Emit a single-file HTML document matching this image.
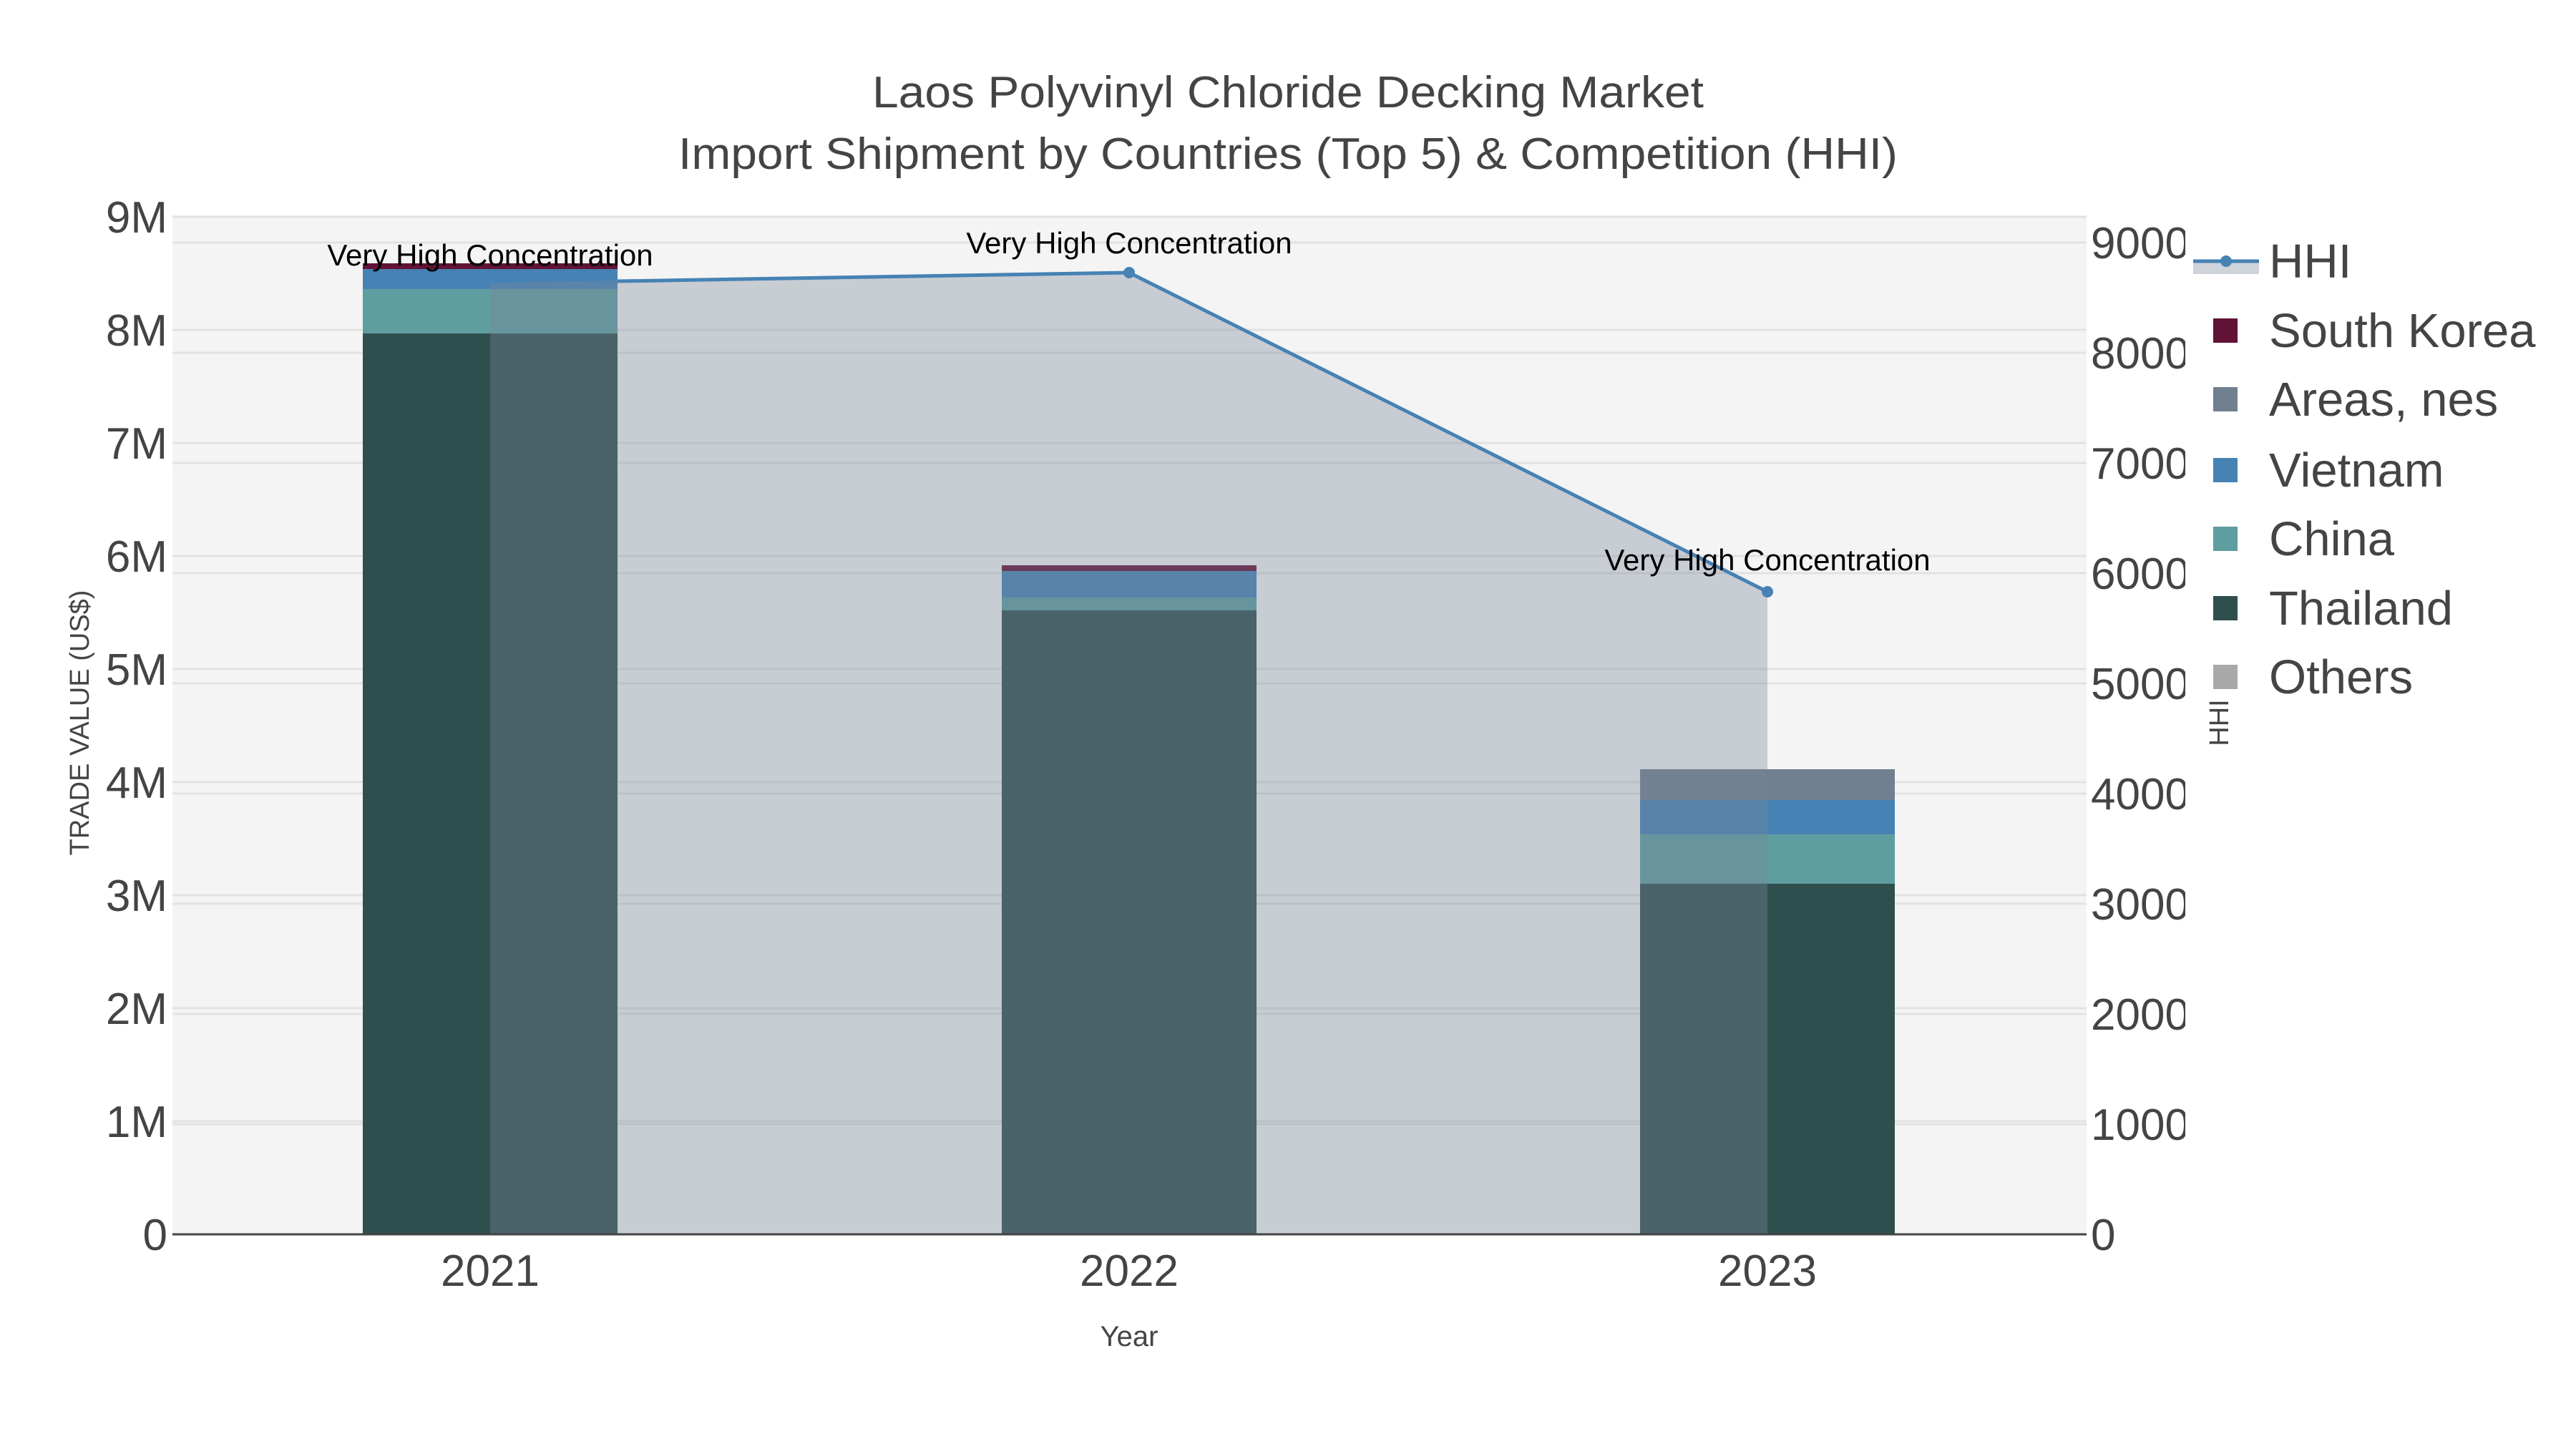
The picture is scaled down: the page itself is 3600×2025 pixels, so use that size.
<!DOCTYPE html>
<html><head><meta charset="utf-8"><style>
html,body{margin:0;padding:0;background:#fff;}
svg{display:block;font-family:"Liberation Sans",sans-serif;}
</style></head><body>
<svg width="3600" height="2025" viewBox="0 0 3600 2025" xmlns="http://www.w3.org/2000/svg">
<rect width="3600" height="2025" fill="#fff"/>
<text x="1800" y="150" font-size="62" fill="#444" text-anchor="middle" textLength="1162" lengthAdjust="spacingAndGlyphs">Laos Polyvinyl Chloride Decking Market</text>
<text x="1800" y="236" font-size="62" fill="#444" text-anchor="middle" textLength="1704" lengthAdjust="spacingAndGlyphs">Import Shipment by Countries (Top 5) &amp; Competition (HHI)</text>
<rect x="241" y="301" width="2675" height="1424" fill="#f4f4f4"/>
<g stroke="#e2e2e2" stroke-width="3">
<line x1="241" x2="2916" y1="1567" y2="1567"/><line x1="241" x2="2916" y1="1409" y2="1409"/><line x1="241" x2="2916" y1="1251" y2="1251"/><line x1="241" x2="2916" y1="1093" y2="1093"/><line x1="241" x2="2916" y1="935" y2="935"/><line x1="241" x2="2916" y1="777" y2="777"/><line x1="241" x2="2916" y1="619" y2="619"/><line x1="241" x2="2916" y1="461" y2="461"/><line x1="241" x2="2916" y1="303" y2="303"/>
<line x1="241" x2="2916" y1="1571" y2="1571"/><line x1="241" x2="2916" y1="1417" y2="1417"/><line x1="241" x2="2916" y1="1263" y2="1263"/><line x1="241" x2="2916" y1="1109" y2="1109"/><line x1="241" x2="2916" y1="955" y2="955"/><line x1="241" x2="2916" y1="801" y2="801"/><line x1="241" x2="2916" y1="647" y2="647"/><line x1="241" x2="2916" y1="493" y2="493"/><line x1="241" x2="2916" y1="339" y2="339"/>
</g>
<rect x="507" y="466" width="356" height="1259" fill="#2F4F4F"/>
<rect x="507" y="404" width="356" height="62" fill="#5F9EA0"/>
<rect x="507" y="376" width="356" height="28" fill="#4682B4"/>
<rect x="507" y="368" width="356" height="8" fill="#611236"/>
<rect x="1400" y="853" width="356" height="872" fill="#2F4F4F"/>
<rect x="1400" y="835" width="356" height="18" fill="#5F9EA0"/>
<rect x="1400" y="798" width="356" height="37" fill="#4682B4"/>
<rect x="1400" y="790" width="356" height="8" fill="#611236"/>
<rect x="2292" y="1235" width="356" height="490" fill="#2F4F4F"/>
<rect x="2292" y="1166" width="356" height="69" fill="#5F9EA0"/>
<rect x="2292" y="1118" width="356" height="48" fill="#4682B4"/>
<rect x="2292" y="1075" width="356" height="43" fill="#708090"/>
<polygon points="685,395 1578,381 2470,827 2470,1725 685,1725" fill="rgb(122,133,153)" fill-opacity="0.36"/>
<polyline points="863,393 1578,381 2470,827" fill="none" stroke="#4682B4" stroke-width="5"/>
<circle cx="1578" cy="381" r="8" fill="#4682B4"/>
<circle cx="2470" cy="827" r="8" fill="#4682B4"/>
<line x1="241" x2="2916" y1="1725" y2="1725" stroke="#444" stroke-width="3"/>
<g font-size="42" fill="#000" text-anchor="middle">
<text x="685" y="371">Very High Concentration</text>
<text x="1578" y="354">Very High Concentration</text>
<text x="2470" y="797">Very High Concentration</text>
</g>
<g font-size="62" fill="#444" text-anchor="end">
<text x="234" y="1747">0</text><text x="234" y="1589">1M</text><text x="234" y="1431">2M</text><text x="234" y="1273">3M</text><text x="234" y="1115">4M</text><text x="234" y="957">5M</text><text x="234" y="799">6M</text><text x="234" y="641">7M</text><text x="234" y="483">8M</text><text x="234" y="325">9M</text>
</g>
<defs><clipPath id="rc"><rect x="2916" y="0" width="138" height="2025"/></clipPath></defs>
<g font-size="62" fill="#444" clip-path="url(#rc)">
<text x="2922" y="1747">0</text><text x="2922" y="1593">1000</text><text x="2922" y="1439">2000</text><text x="2922" y="1285">3000</text><text x="2922" y="1131">4000</text><text x="2922" y="977">5000</text><text x="2922" y="823">6000</text><text x="2922" y="669">7000</text><text x="2922" y="515">8000</text><text x="2922" y="361">9000</text>
</g>
<g font-size="62" fill="#444" text-anchor="middle">
<text x="685" y="1797">2021</text><text x="1578" y="1797">2022</text><text x="2470" y="1797">2023</text>
</g>
<text x="1578" y="1881" font-size="40" fill="#444" text-anchor="middle">Year</text>
<text transform="translate(124,1010) rotate(-90)" font-size="38" fill="#444" text-anchor="middle">TRADE VALUE (US$)</text>
<text transform="translate(3114,1010) rotate(-90)" font-size="38" fill="#444" text-anchor="middle">HHI</text>
<rect x="3065" y="367" width="92" height="16" fill="rgb(122,133,153)" fill-opacity="0.36"/>
<line x1="3065" x2="3157" y1="365" y2="365" stroke="#4682B4" stroke-width="5"/>
<circle cx="3111" cy="365" r="8" fill="#4682B4"/>
<rect x="3093" y="445" width="34" height="34" fill="#611236"/>
<rect x="3093" y="541" width="34" height="34" fill="#708090"/>
<rect x="3093" y="640" width="34" height="34" fill="#4682B4"/>
<rect x="3093" y="736" width="34" height="34" fill="#5F9EA0"/>
<rect x="3093" y="833" width="34" height="34" fill="#2F4F4F"/>
<rect x="3093" y="929" width="34" height="34" fill="#A9A9A9"/>
<g font-size="67" fill="#444">
<text x="3171" y="388">HHI</text>
<text x="3171" y="485">South Korea</text>
<text x="3171" y="581">Areas, nes</text>
<text x="3171" y="680">Vietnam</text>
<text x="3171" y="776">China</text>
<text x="3171" y="873">Thailand</text>
<text x="3171" y="969">Others</text>
</g>
</svg>
</body></html>
